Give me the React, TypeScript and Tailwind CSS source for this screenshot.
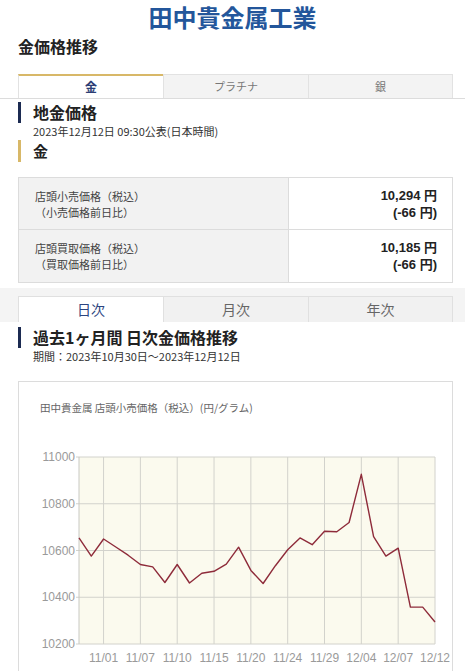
const prices = [
  10654, 10576, 10649, 10615, 10580, 10540, 10530, 10463, 10540, 10461, 10503, 10511, 10542, 10614, 10515,
  10459, 10535, 10603, 10654, 10625, 10682, 10680, 10720, 10926, 10659, 10576, 10610, 10358, 10358, 10294,
];

const xLabels = ['11/01', '11/07', '11/10', '11/15', '11/20', '11/24', '11/29', '12/04', '12/07', '12/12'];
const yTicks = [11000, 10800, 10600, 10400, 10200];

// plot box inside the svg
const PL = 60;
const PR = 416;
const PT = 16;
const PB = 203;

const px = (i: number) => PL + (i * (PR - PL)) / (prices.length - 1);
const py = (v: number) => PT + ((11000 - v) * (PB - PT)) / 800;

function PriceChart() {
  const points = prices.map((v, i) => `${px(i).toFixed(1)},${py(v).toFixed(1)}`).join(' ');
  return (
    <svg width="433" height="240" className="block font-['Liberation_Sans',sans-serif]">
      <rect x={PL} y={PT} width={PR - PL} height={PB - PT} fill="#fbfaee" />
      {yTicks.map((t) => (
        <g key={t}>
          <line x1={PL - 3} x2={PR} y1={py(t)} y2={py(t)} stroke="#d2d2cc" strokeWidth="1" />
          <text x={PL - 4} y={py(t) + 4} textAnchor="end" fontSize="12" fill="#9a9a9a">
            {t}
          </text>
        </g>
      ))}
      <line x1={PL} x2={PL} y1={PT} y2={PB} stroke="#c8c8c2" strokeWidth="1" />
      {xLabels.map((l, k) => {
        const x = px(2 + k * 3);
        return (
          <g key={l}>
            <line x1={x} x2={x} y1={PT} y2={PB} stroke="#d2d2cc" strokeWidth="1" />
            <text x={x} y={PB + 18} textAnchor="middle" fontSize="12" fill="#9a9a9a">
              {l}
            </text>
          </g>
        );
      })}
      <polyline points={points} fill="none" stroke="#8e2b3a" strokeWidth="1.4" strokeLinejoin="round" />
    </svg>
  );
}

function SectionTitle({ children, bar = 'bg-[#1c2b52]' }: { children: React.ReactNode; bar?: string }) {
  return (
    <div className="flex items-stretch">
      <div className={`w-[3px] ${bar}`} />
      <div className="pl-3">{children}</div>
    </div>
  );
}

export default function App() {
  return (
    <div className="w-[465px] bg-white text-[#222] font-['Noto_Sans_CJK_JP',sans-serif]">
      {/* header */}
      <h1 className="pt-[2px] text-center text-[24px] leading-[30px] font-bold text-[#23569b]">田中貴金属工業</h1>
      <h2 className="mt-[2px] ml-[18px] text-[16px] leading-[24px] font-bold">金価格推移</h2>

      {/* metal tabs */}
      <div className="mt-[16px] border-b border-[#dcdcdc]">
        <div className="ml-[18px] mr-[12px] grid grid-cols-3 h-[24px] text-[11px]">
          <div className="flex items-center justify-center border-t-2 border-l border-t-[#d8b868] border-l-[#e2e2e2] bg-white font-bold text-[12px] text-[#2c3e75]">
            金
          </div>
          <div className="flex items-center justify-center border-t border-l border-[#e2e2e2] bg-[#f3f3f3] text-[#777]">
            プラチナ
          </div>
          <div className="flex items-center justify-center border-t border-l border-r border-[#e2e2e2] bg-[#f3f3f3] text-[#777]">
            銀
          </div>
        </div>
      </div>

      {/* 地金価格 */}
      <div className="ml-[18px] mr-[12px] mt-[3px]">
        <SectionTitle>
          <div className="text-[16px] leading-[21px] font-bold">地金価格</div>
        </SectionTitle>
        <div className="pl-[15px] text-[11px] leading-[16px] text-[#333]">2023年12月12日 09:30公表(日本時間)</div>
        <div className="mt-[1px]">
          <SectionTitle bar="bg-[#d8b868]">
            <div className="text-[15px] leading-[22px] font-bold">金</div>
          </SectionTitle>
        </div>

        <div className="mt-[15px] border border-[#dcdcdc] text-[11px]">
          <div className="grid grid-cols-[270px_1fr] h-[52px] border-b border-[#dcdcdc]">
            <div className="flex flex-col justify-center pl-[16px] bg-[#f2f2f2] border-r border-[#dcdcdc] leading-[16px] text-[#444]">
              <span>店頭小売価格（税込）</span>
              <span>（小売価格前日比）</span>
            </div>
            <div className="flex flex-col justify-center items-end pr-[15px] font-['Liberation_Sans','Noto_Sans_CJK_JP',sans-serif] font-bold text-[13px] leading-[17px] text-[#222]">
              <span>10,294 円</span>
              <span>(-66 円)</span>
            </div>
          </div>
          <div className="grid grid-cols-[270px_1fr] h-[52px]">
            <div className="flex flex-col justify-center pl-[16px] bg-[#f2f2f2] border-r border-[#dcdcdc] leading-[16px] text-[#444]">
              <span>店頭買取価格（税込）</span>
              <span>（買取価格前日比）</span>
            </div>
            <div className="flex flex-col justify-center items-end pr-[15px] font-['Liberation_Sans','Noto_Sans_CJK_JP',sans-serif] font-bold text-[13px] leading-[17px] text-[#222]">
              <span>10,185 円</span>
              <span>(-66 円)</span>
            </div>
          </div>
        </div>
      </div>

      {/* period tabs */}
      <div className="mt-[5px] bg-[#f4f4f4] pt-[8px]">
        <div className="ml-[18px] mr-[12px] grid grid-cols-3 h-[26px] text-[14px]">
          <div className="flex items-center justify-center border-t border-l border-[#e0e0e0] bg-white text-[#2c4580]">
            日次
          </div>
          <div className="flex items-center justify-center border-t border-l border-[#e0e0e0] bg-[#f1f1f1] text-[#666]">
            月次
          </div>
          <div className="flex items-center justify-center border-t border-l border-r border-[#e0e0e0] bg-[#f1f1f1] text-[#666]">
            年次
          </div>
        </div>
      </div>

      {/* daily chart */}
      <div className="ml-[18px] mr-[12px] mt-[5px]">
        <SectionTitle>
          <div className="text-[16px] leading-[21px] font-bold">過去1ヶ月間 日次金価格推移</div>
        </SectionTitle>
        <div className="pl-[15px] text-[11px] leading-[16px] text-[#333]">期間：2023年10月30日～2023年12月12日</div>

        <div className="mt-[17px] border border-[#dcdcdc] pb-[20px]">
          <div className="pt-[19px] pl-[21px] text-[10.5px] leading-[14px] text-[#666]">
            田中貴金属 店頭小売価格（税込）(円/グラム)
          </div>
          <div className="mt-[26px]">
            <PriceChart />
          </div>
        </div>
      </div>
    </div>
  );
}
